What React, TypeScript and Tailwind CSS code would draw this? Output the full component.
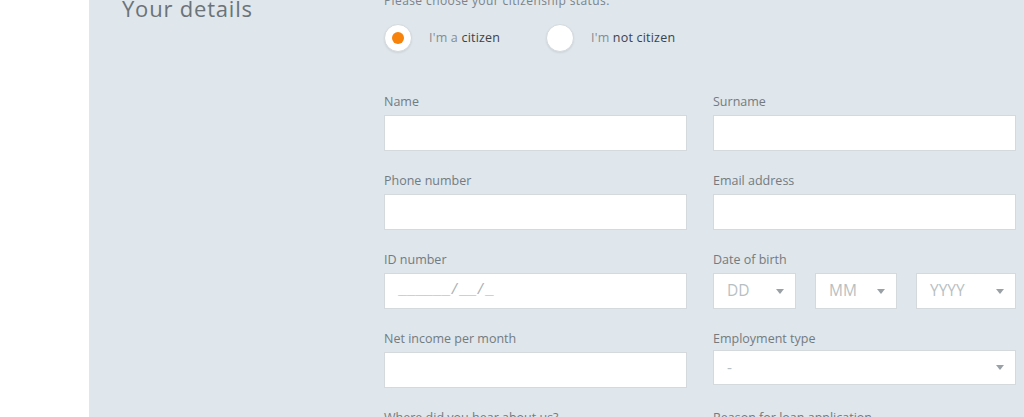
import React from "react";

const Caret = () => (
  <svg width="8" height="5" viewBox="0 0 8 5" className="shrink-0">
    <path d="M0 0 L8 0 L4 5 Z" fill="#9aa1a6" />
  </svg>
);

const Label = ({ children }: { children: React.ReactNode }) => (
  <div className="h-[18px] leading-[18px] text-[12.5px] text-[#737b80] mb-[4px]">{children}</div>
);

const Input = ({ placeholder }: { placeholder?: string }) => (
  <div className="h-[36px] bg-white border border-[#d3d9dd] flex items-center pl-[13px] text-[14.5px] text-[#a9b0b4] font-['Liberation_Mono',monospace]">
    {placeholder}
  </div>
);

const Select = ({ text, className }: { text: string; className?: string }) => (
  <div
    className={
      "h-[36px] bg-white border border-[#d3d9dd] flex items-center justify-between pl-[13px] pr-[11px] " +
      (className ?? "")
    }
  >
    <span className="text-[15.5px] text-[#b8bfc3]">{text}</span>
    <Caret />
  </div>
);

export default function App() {
  return (
    <div
      className="w-[1024px] h-[417px] overflow-hidden flex bg-white"
      style={{ fontFamily: "'Open Sans', Lato, sans-serif" }}
    >
      <div className="w-[89px] shrink-0 bg-white" />
      <div className="flex-1 bg-[#dfe6ec] flex">
        <div className="w-[295px] shrink-0 pl-[33px]">
          <div className="-mt-[7px] text-[22px] leading-[30px] text-[#6b7378] tracking-[0.8px]">Your details</div>
        </div>
        <div className="w-[632px] shrink-0 -mt-[8px]">
          <div className="h-[18px] leading-[18px] text-[12px] text-[#7b8388] tracking-[0.4px]">Please choose your citizenship status:</div>
          <div className="mt-[14px] h-[28px] flex items-center">
            <div className="flex items-center w-[162px]">
              <div className="w-[28px] h-[28px] rounded-full bg-white border border-[#d3d9dd] flex items-center justify-center shadow-[0_1px_2px_rgba(0,0,0,0.08)]">
                <div className="w-[12px] h-[12px] rounded-full bg-[#f7820c]" />
              </div>
              <span className="ml-[17px] text-[12.5px] text-[#858c91] tracking-[0.2px]">
                I'm a <span className="text-[#3c4348]">citizen</span>
              </span>
            </div>
            <div className="flex items-center">
              <div className="w-[28px] h-[28px] rounded-full bg-white border border-[#d3d9dd] shadow-[0_1px_2px_rgba(0,0,0,0.08)]" />
              <span className="ml-[17px] text-[12.5px] text-[#858c91] tracking-[0.2px]">
                I'm <span className="text-[#3c4348]">not citizen</span>
              </span>
            </div>
          </div>
          <div className="mt-[41px] grid grid-cols-[303px_303px] gap-x-[26px] gap-y-[21px]">
            <div>
              <Label>Name</Label>
              <Input />
            </div>
            <div>
              <Label>Surname</Label>
              <Input />
            </div>
            <div>
              <Label>Phone number</Label>
              <Input />
            </div>
            <div>
              <Label>Email address</Label>
              <Input />
            </div>
            <div>
              <Label>ID number</Label>
              <Input placeholder="______/__/_" />
            </div>
            <div>
              <Label>Date of birth</Label>
              <div className="flex gap-[19px]">
                <Select text="DD" className="w-[83px]" />
                <Select text="MM" className="w-[82px]" />
                <Select text="YYYY" className="w-[100px]" />
              </div>
            </div>
            <div>
              <Label>Net income per month</Label>
              <Input />
            </div>
            <div>
              <div className="h-[18px] leading-[18px] text-[12.5px] text-[#737b80] mb-[2px]">Employment type</div>
              <Select text="-" className="!h-[35px]" />
            </div>
            <div>
              <Label>Where did you hear about us?</Label>
            </div>
            <div>
              <Label>Reason for loan application</Label>
            </div>
          </div>
        </div>
      </div>
    </div>
  );
}
